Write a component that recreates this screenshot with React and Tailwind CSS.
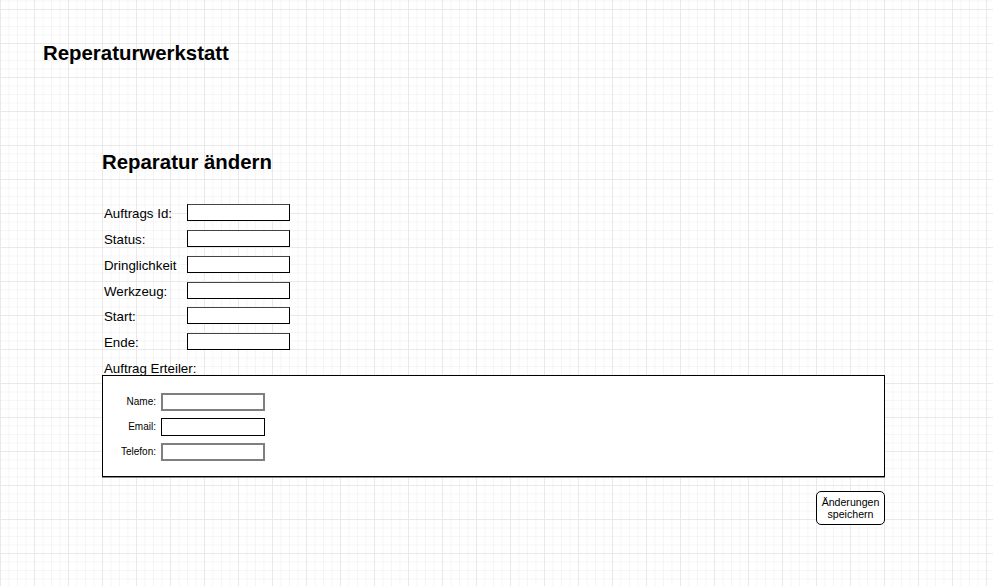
export default function App() {
  const rows = ["Auftrags Id:", "Status:", "Dringlichkeit", "Werkzeug:", "Start:", "Ende:"];
  const inner = [
    { l: "Name:", c: "border-2 border-[#7f7f7f]" },
    { l: "Email:", c: "border border-black" },
    { l: "Telefon:", c: "border-2 border-[#7f7f7f]" },
  ];
  return (
    <div className="min-h-screen w-full text-black font-['Liberation_Sans',Arial,sans-serif] bg-white bg-[linear-gradient(to_right,#e9e9e9_1px,transparent_1px),linear-gradient(to_bottom,#e9e9e9_1px,transparent_1px),linear-gradient(to_right,#f5f5f5_1px,transparent_1px),linear-gradient(to_bottom,#f5f5f5_1px,transparent_1px)] bg-[size:34px_34px,34px_34px,8.5px_8.5px,8.5px_8.5px] bg-[position:0_9px,0_9px,0_9px,0_9px]">
      <div className="pt-[42px] pl-[43px]">
        <h1 className="text-[20.4px] font-bold leading-[23px]">Reperaturwerkstatt</h1>
      </div>
      <div className="ml-[102px] w-[783px] mt-[86px]">
        <h2 className="text-[20.4px] font-bold leading-[23px]">Reparatur ändern</h2>
        <div className="mt-[30px] flex flex-col gap-[8.85px]">
          {rows.map((r) => (
            <div key={r} className="flex items-center h-[17px]">
              <span className="w-[85px] shrink-0 pl-[2px] pt-[2px] text-[13.3px] leading-[17px]">{r}</span>
              <div className="w-[103px] h-[17px] border border-black border-t-[#444] bg-white" />
            </div>
          ))}
        </div>
        <div className="mt-[10px] pl-[2px] pt-[1px] text-[13.3px] leading-[15px]">Auftrag Erteiler:</div>
        <div className="-mt-[1px] h-[102px] border border-black bg-white shadow-[0_1px_0_#8a8a8a] pt-[17px] flex flex-col gap-[7px]">
          {inner.map((r) => (
            <div key={r.l} className="flex items-center h-[18px]">
              <span className="w-[53px] shrink-0 text-right text-[10px] leading-[18px]">{r.l}</span>
              <div className={`ml-[5px] w-[104px] h-[18px] bg-white ${r.c}`} />
            </div>
          ))}
        </div>
        <div className="mt-[14px] flex justify-end">
          <button className="w-[69px] h-[34px] rounded-[5px] border border-black bg-white text-[10.6px] leading-[12px] text-center">
            Änderungen
            <br />
            speichern
          </button>
        </div>
      </div>
    </div>
  );
}
